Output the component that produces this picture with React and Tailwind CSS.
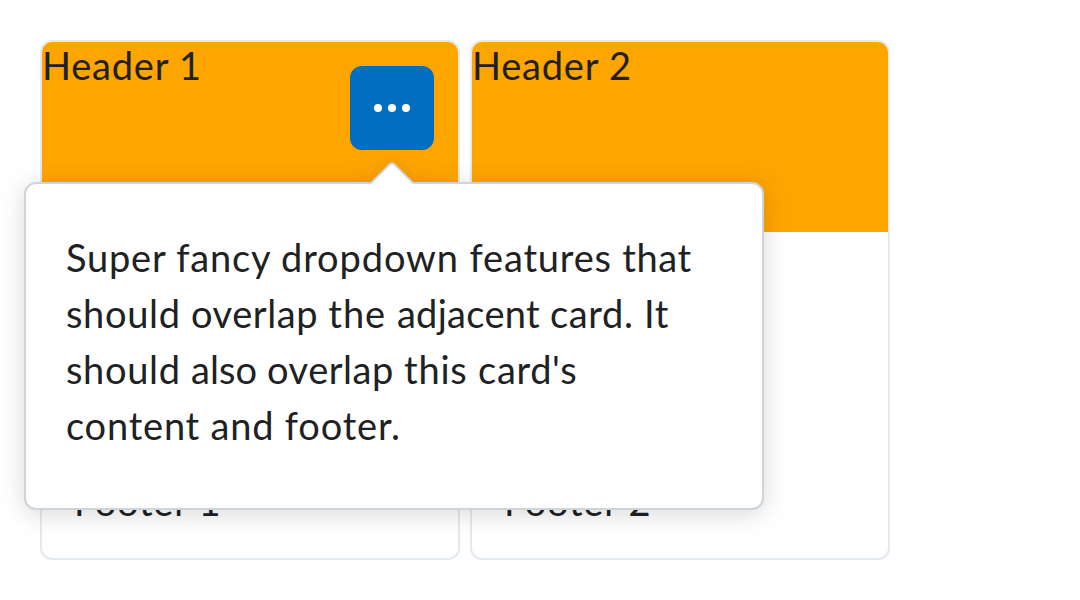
function Card({ title, footer, children }) {
  return (
    <section className="flex h-[520px] w-[420px] flex-col rounded-xl border-2 border-[#e3e9f1] bg-white">
      <header className="flex h-[190px] shrink-0 justify-between rounded-t-[10px] bg-[#ffa500] pr-6">
        <div className="leading-[46px]">{title}</div>
        {children}
      </header>
      <div className="grow" />
      <footer className="px-8 pb-[29px] leading-[56px]">{footer}</footer>
    </section>
  );
}

function Dropdown() {
  return (
    <div className="relative mt-6 h-[84px] w-[84px]">
      <button aria-label="Actions" className="flex h-full w-full items-center justify-center rounded-xl bg-[#006fbf]">
        <svg width="36" height="36" viewBox="0 0 36 36" fill="white">
          <circle cx="4" cy="18" r="4" />
          <circle cx="18" cy="18" r="4" />
          <circle cx="32" cy="18" r="4" />
        </svg>
      </button>
      <div className="absolute top-[116px] left-[-326px] z-10 h-[328px] w-[740px] rounded-xl border-2 border-[#cdd5dc] bg-white px-10 py-[45px] leading-[56px] [filter:drop-shadow(0_4px_12px_rgba(0,0,0,0.15))]">
        <p className="w-[640px]">
          Super fancy <span className="tracking-[0.9px]">dropdown </span>
          features <span className="tracking-[0.6px]">that </span>
          <span className="tracking-[0.66px]">should </span>
          <span className="tracking-[0.55px]">overlap </span>
          <span className="tracking-[1px]">the </span>
          <span className="tracking-[0.3px]">adjacent </span>
          <span className="tracking-[0.65px]">card. It </span>
          <span className="tracking-[0.66px]">should </span>
          <span className="tracking-[0.1px]">also </span>
          <span className="tracking-[0.5px]">overlap </span>
          this <span className="tracking-[0.65px]">card's </span>
          content and footer.
        </p>
        <svg className="absolute top-[-22px] left-[342px]" width="48" height="24" viewBox="0 0 48 24">
          <path d="M2 22 L21.5 2.5 Q24 0 26.5 2.5 L46 22 V24 H2Z" fill="white" />
          <path d="M2.5 21.5 L21.5 2.5 Q24 0 26.5 2.5 L45.5 21.5" fill="none" stroke="#cdd5dc" strokeWidth="2" />
        </svg>
      </div>
    </div>
  );
}

export default function App() {
  return (
    <main className="flex h-[600px] w-[1080px] gap-2.5 overflow-hidden bg-white p-10 font-['Lato',sans-serif] text-[38px] tracking-[0.8px] text-[#202122]">
      <div className="relative z-10">
        <Card title="Header 1" footer="Footer 1">
          <Dropdown />
        </Card>
      </div>
      <Card title="Header 2" footer="Footer 2" />
    </main>
  );
}
